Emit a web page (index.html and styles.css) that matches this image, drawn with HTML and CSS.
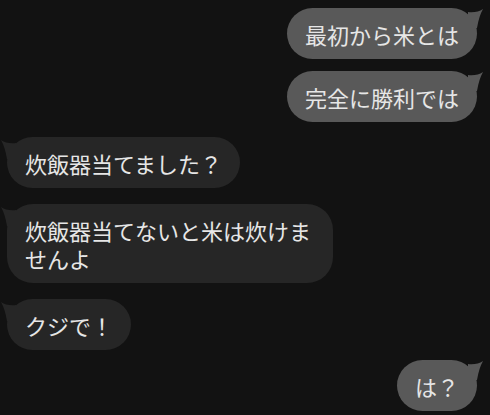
FILE: index.html
```html
<!DOCTYPE html>
<html lang="ja">
  <head>
    <meta charset="UTF-8" />
    <meta name="viewport" content="width=device-width, initial-scale=1.0" />
    <title>トーク</title>
    <link rel="stylesheet" href="styles.css">
  </head>
  <body>
    <div class="chat">
      <div class="msg me">
        最初から米とは
        <svg class="tail" viewBox="0 0 16 24"><path d="M0 4 Q9 5 15 1 Q11 8 9 20 L0 20 Z" /></svg>
      </div>
      <div class="msg me">
        完全に勝利では
        <svg class="tail" viewBox="0 0 16 24"><path d="M0 4 Q9 5 15 1 Q11 8 9 20 L0 20 Z" /></svg>
      </div>
      <div class="msg them">
        炊飯器当てました？
        <svg class="tail" viewBox="0 0 16 24"><path d="M0 4 Q9 5 15 1 Q11 8 9 20 L0 20 Z" /></svg>
      </div>
      <div class="msg them">
        炊飯器当てないと米は炊けませんよ
        <svg class="tail" viewBox="0 0 16 24"><path d="M0 4 Q9 5 15 1 Q11 8 9 20 L0 20 Z" /></svg>
      </div>
      <div class="msg them">
        クジで！
        <svg class="tail" viewBox="0 0 16 24"><path d="M0 4 Q9 5 15 1 Q11 8 9 20 L0 20 Z" /></svg>
      </div>
      <div class="msg me">
        は？
        <svg class="tail" viewBox="0 0 16 24"><path d="M0 4 Q9 5 15 1 Q11 8 9 20 L0 20 Z" /></svg>
      </div>
    </div>
  </body>
</html>
```

FILE: styles.css
```css
body {
  margin: 0;
  padding: 0;
  background: #121212;
  font-family: "Noto Sans CJK JP", "Noto Sans", sans-serif;
  height: 100vh;
  overflow: hidden;
}

.chat {
  display: flex;
  flex-direction: column;
  padding: 8px 13px 0 7px;
}

.msg {
  position: relative;
  max-width: 290px;
  padding: 11.5px 18px;
  border-radius: 26px;
  color: #e6e6e6;
  font-size: 22px;
  line-height: 28px;
}

.me {
  align-self: flex-end;
  background: #595959;
}

.them {
  align-self: flex-start;
  background: #262626;
}

.msg + .msg {
  margin-top: 12px;
}

.me + .them,
.them + .me {
  margin-top: 15px;
}

.them + .them {
  margin-top: 16px;
}

.me + .me:last-child {
  margin-top: 12px;
}

.them + .me:last-child {
  margin-top: 10px;
}

.tail {
  position: absolute;
  top: 0;
  width: 16px;
  height: 24px;
}

.me .tail {
  right: -7px;
  fill: #595959;
}

.them .tail {
  left: -7px;
  top: 2px;
  fill: #262626;
  transform: scaleX(-1);
}
```
